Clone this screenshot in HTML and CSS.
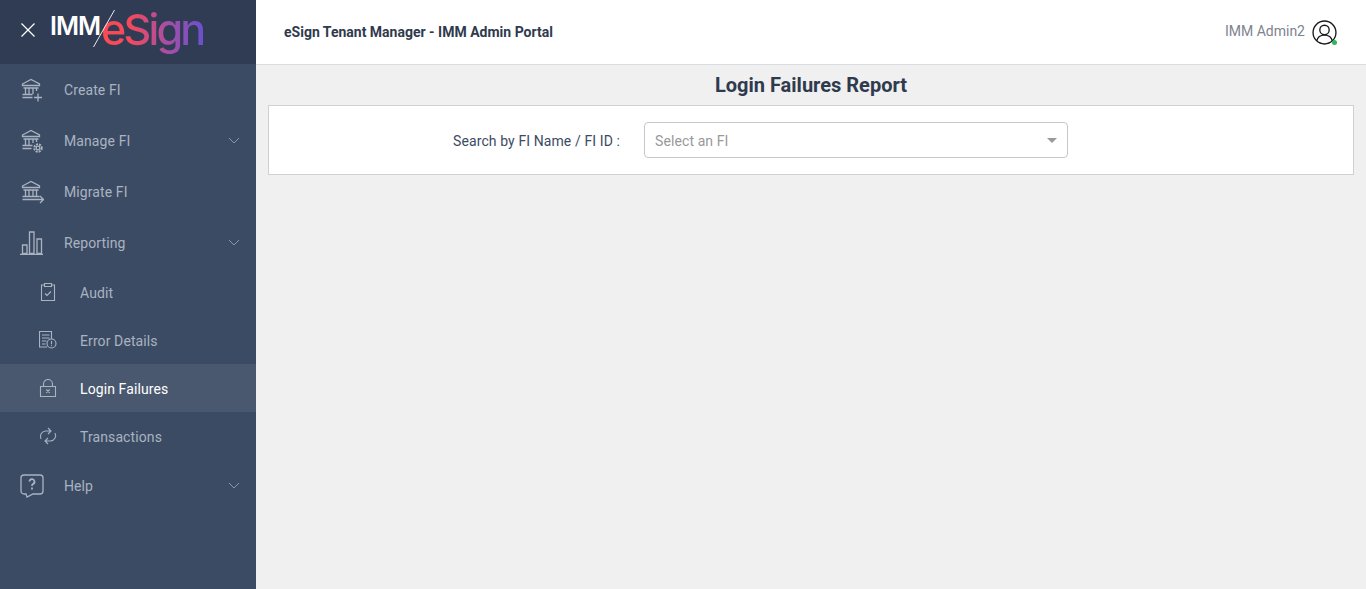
FILE: index.html
```html
<!DOCTYPE html>
<html lang="en">
<head>
<meta charset="utf-8">
<title>Login Failures Report</title>
<link rel="stylesheet" href="styles.css">
</head>
<body>
<div class="app">
  <aside class="sidebar">
    <div class="brand">
      <svg class="close" viewBox="0 0 14 14"><path d="M.5.5l13 13M13.500.5l-13 13"/></svg>
      <div class="logo">
        <span class="logo-imm">IMM</span>
        <svg class="logo-slash" viewBox="0 0 22 37"><path d="M21.500 0 .5 37"/></svg>
        <span class="logo-esign">eSign</span>
      </div>
    </div>
    <nav class="nav">
      <a class="row">
        <svg class="ico" viewBox="0 0 24 24"><path d="M2.500 6 11 1.500 19.500 6v1.500h-17zM3.500 10h15M5.500 10v6M9 10v6M13 10v6M16.500 10v3M2.500 16.500h10M2.500 19.500h10"/><path d="M18 15.500v8M14 19.500h8"/></svg>
        <span class="lbl">Create FI</span>
      </a>
      <a class="row">
        <svg class="ico" viewBox="0 0 24 24"><path d="M2.500 6 11 1.500 19.500 6v1.500h-17zM3.500 10h15M5.500 10v6M9 10v6M13 10v4M16.500 10v3M2.500 16.500h10M2.500 19.500h9"/><circle cx="18" cy="19" r="1.800"/><circle cx="18" cy="19" r="3.700" stroke-dasharray="2 1" stroke-width="2"/></svg>
        <span class="lbl">Manage FI</span>
        <svg class="chev" viewBox="0 0 12 7"><path d="M1 1l5 5 5-5"/></svg>
      </a>
      <a class="row">
        <svg class="ico" viewBox="0 0 24 24"><path d="M2.500 6 11 1.500 19.500 6v1.500h-17zM3.500 10h15M5.500 10v6M9 10v6M13 10v6M16.500 10v6M2.500 16.500h17M2.500 19.500h21M20 16l3.500 3.500L20 23"/></svg>
        <span class="lbl">Migrate FI</span>
      </a>
      <a class="row">
        <svg class="ico" viewBox="0 0 24 24"><path d="M0 23.500h23M2.500 22.500V14H7v8.500zM9.500 22.500V1H14v21.500zM17 22.500V8h4.500v14.500z"/></svg>
        <span class="lbl">Reporting</span>
        <svg class="chev" viewBox="0 0 12 7"><path d="M1 1l5 5 5-5"/></svg>
      </a>
      <a class="row sub">
        <svg class="ico-s" viewBox="0 0 18 18"><path d="M5.500 2H2.500v15.500h13V2h-3M5.500.5h7v3h-7zM6 10.500l2 2 4-4"/></svg>
        <span class="lbl">Audit</span>
      </a>
      <a class="row sub">
        <svg class="ico-s" viewBox="0 0 18 18"><path d="M8 16H.5V.5h12V8M3 4h7.500M3 7h7.500M3 10h4.500M3 13h3.500"/><circle cx="12.500" cy="12.500" r="4.500"/><path d="M12.500 10v3.300M12.500 14.300v1"/></svg>
        <span class="lbl">Error Details</span>
      </a>
      <a class="row sub active">
        <svg class="ico-s" viewBox="0 0 18 18"><path d="M4.500 7.500V5a4.500 4.500 0 0 1 9 0v2.500M1.500 7.500h15v10h-15zM7.300 10.500l3.400 3.400M10.700 10.500l-3.400 3.400"/></svg>
        <span class="lbl">Login Failures</span>
      </a>
      <a class="row sub">
        <svg class="ico-s" viewBox="0 0 18 18"><path d="M2 12A5.500 5.500 0 0 1 6.500 4H12M9 1l3 3-3 3M16 6A5.500 5.500 0 0 1 11.500 14H6M9 11l-3 3 3 3"/></svg>
        <span class="lbl">Transactions</span>
      </a>
      <a class="row">
        <svg class="ico" viewBox="0 0 24 24"><path d="M4 1h16a3 3 0 0 1 3 3v13a3 3 0 0 1-3 3h-7l-6 3-1-3H4a3 3 0 0 1-3-3V4a3 3 0 0 1 3-3z"/><path class="qmark" d="M9.500 7.500a2.500 2.500 0 1 1 3.500 2.500c-1 .5-1 1-1 2M12 13.500v2"/></svg>
        <span class="lbl">Help</span>
        <svg class="chev" viewBox="0 0 12 7"><path d="M1 1l5 5 5-5"/></svg>
      </a>
    </nav>
  </aside>
  <div class="main">
    <header class="topbar">
      <div class="portal">eSign Tenant Manager - IMM Admin Portal</div>
      <div class="user">
        <span class="user-name">IMM Admin2</span>
        <span class="avatar">
          <svg viewBox="0 0 24 24"><circle cx="12" cy="12" r="11"/><circle cx="12" cy="9.500" r="4.500"/><path d="M4.500 20c1-4 4-5.500 7.500-5.500s6.500 1.500 7.500 5.500"/></svg>
          <span class="status"></span>
        </span>
      </div>
    </header>
    <main class="content">
      <h1 class="title">Login Failures Report</h1>
      <section class="card">
        <label class="field-label">Search by FI Name / FI ID :</label>
        <div class="select">
          <span class="placeholder">Select an FI</span>
          <span class="caret"></span>
        </div>
      </section>
    </main>
  </div>
</div>
</body>
</html>
```
FILE: styles.css
```css
* { box-sizing: border-box; }
html, body { margin: 0; height: 100%; overflow: hidden; }
body { font-family: Roboto, "Liberation Sans", sans-serif; font-size: 14px; letter-spacing: .1px; background: #f0f0f0; }
.app { display: flex; height: 589px; }

.sidebar { width: 256px; flex: none; background: #3c4b64; color: #a9b3c1; }
.brand { height: 64px; background: #303c54; display: flex; align-items: flex-start; padding: 7px 0 0 21px; }
.close { width: 14px; height: 14px; flex: none; margin-top: 16px; fill: none; stroke: #fff; stroke-width: 1.2; }
.logo { display: flex; align-items: flex-start; height: 50px; margin-left: 15px; position: relative; }
.logo-imm { font-family: Inter, Roboto, sans-serif; font-weight: 600; color: #fff; font-size: 25px; line-height: 30px; margin-top: 4px; letter-spacing: -1px; }
.logo-slash { position: absolute; left: 43px; top: 3px; width: 22px; height: 37px; fill: none; stroke: #e8e8ee; stroke-width: 1; }
.logo-esign { font-family: Inter, Roboto, sans-serif; font-weight: 500; font-size: 43px; line-height: 50px; letter-spacing: -2.800px; margin-left: 1px; margin-top: -3px; background: linear-gradient(90deg, #ff4a50 0%, #f2495f 30%, #a64fa5 65%, #6b50cc 100%); -webkit-background-clip: text; background-clip: text; color: transparent; }

.row { display: flex; align-items: center; height: 51px; padding: 0 16px 0 20px; }
.row.sub { height: 48px; padding-left: 39px; }
.sub .lbl { padding-top: 2px; }
.row.active { background: #4a586f; color: #fff; }
.lbl { flex: 1; }
.ico { width: 24px; height: 24px; flex: none; margin-right: 20px; fill: none; stroke: #a9b3c1; stroke-width: 1.300; }
.qmark { stroke-width: 1.800; }
.ico-s { width: 18px; height: 18px; flex: none; margin-right: 23px; fill: none; stroke: #a9b3c1; stroke-width: 1.100; }
.chev { width: 12px; height: 7px; flex: none; fill: none; stroke: #8b97a9; stroke-width: 1; }

.main { flex: 1; min-width: 0; display: flex; flex-direction: column; }
.topbar { height: 65px; flex: none; background: #fff; border-bottom: 1px solid #d8dbe0; display: flex; align-items: center; justify-content: space-between; padding: 0 29px 0 28px; }
.portal { font-size: 14px; font-weight: 700; letter-spacing: 0; color: #2f3a4d; }
.user { display: flex; align-items: center; gap: 7px; }
.user-name { color: #7d8490; padding-bottom: 2px; letter-spacing: 0; }
.avatar { position: relative; width: 25px; height: 25px; }
.avatar svg { display: block; width: 25px; height: 25px; fill: none; stroke: #1a1a1a; stroke-width: 1.300; }
.status { position: absolute; right: 0; bottom: 0; width: 5px; height: 5px; border-radius: 50%; background: #2eb85c; }

.content { flex: 1; padding: 0 12px; }
.title { margin: 0; height: 40px; line-height: 40px; text-align: center; font-size: 20px; font-weight: 700; letter-spacing: 0; color: #2f3a4d; }
.card { height: 70px; background: #fff; border: 1px solid #d0d0d0; display: flex; align-items: center; padding-left: 183px; }
.field-label { width: 168px; text-align: right; color: #3c4b64; padding-top: 2px; }
.select { width: 424px; height: 36px; margin-left: 24px; border: 1px solid #c8c8c8; border-radius: 4px; display: flex; align-items: center; justify-content: space-between; padding: 0 10px; }
.placeholder { color: #999; padding-top: 2px; }
.caret { width: 0; height: 0; border-left: 5px solid transparent; border-right: 5px solid transparent; border-top: 5px solid #999; }
```
